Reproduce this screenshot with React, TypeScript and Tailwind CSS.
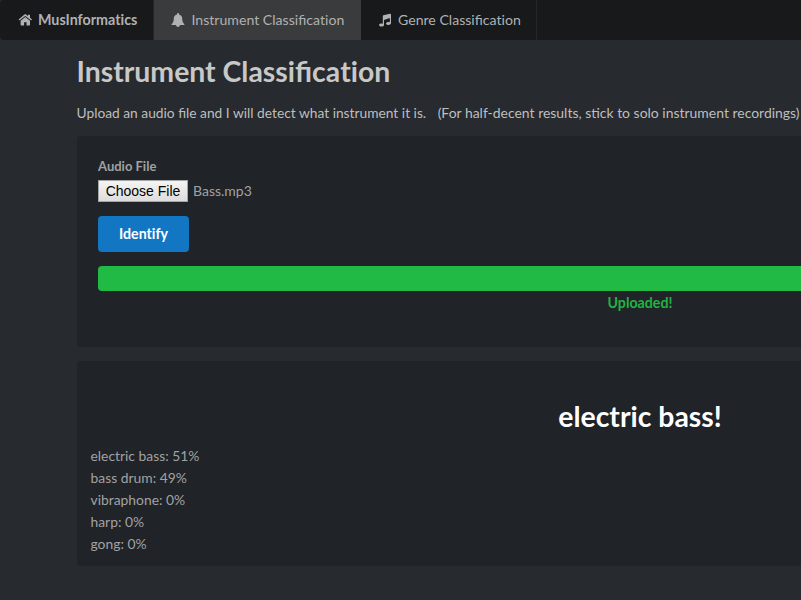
import type { ReactNode } from "react";

const results = ["electric bass: 51%", "bass drum: 49%", "vibraphone: 0%", "harp: 0%", "gong: 0%"];

function Icon({ children }: { children: ReactNode }) {
  return <svg viewBox="0 0 14 14" className="mr-[6px] size-[14px] shrink-0" fill="currentColor">{children}</svg>;
}

const HomeIcon = () => (
  <Icon>
    <path d="M7.3 3.900 12 7.800v4a.6.6 0 0 1-.6.6H8.500V9.200H6.100v3.200H3.200a.6.6 0 0 1-.6-.6v-4z" />
    <path d="M7.300 1.300c.3 0 .6.1.8.3l1.900 1.500V1.800H12v3l1.800 1.500c.2.1.2.3 0 .4l-.5.6c-.1.1-.3.1-.4 0L7.300 3 1.700 7.300c-.1.1-.3.1-.4 0l-.5-.6c-.2-.1-.2-.3 0-.4l5.700-4.700c.2-.2.5-.3.8-.3z" />
  </Icon>
);

const BellIcon = () => (
  <Icon>
    <path d="M7 0c.6 0 1 .4 1 .9v.5c2 .4 3.200 2 3.200 4 0 3 .8 4.600 2.300 5.800 0 .5-.4.9-1 .9H9c0 1.100-.9 1.900-2 1.900s-2-.8-2-1.900H1.500c-.6 0-1-.4-1-.9C2 10 2.800 8.400 2.800 5.400c0-2 1.200-3.600 3.200-4V.9C6 .4 6.400 0 7 0z" />
  </Icon>
);

const MusicIcon = () => (
  <Icon>
    <path d="M13 1.400v8.900c0 1.100-1.300 1.700-2.600 1.700s-2.400-.6-2.400-1.500S9.100 9 10.400 9c.5 0 1 .1 1.400.300V5.100L6 6.900v5c0 1.100-1.300 1.700-2.600 1.700S1 13 1 12.100s1.100-1.500 2.400-1.500c.5 0 1 .1 1.400.3V3c0-.3.200-.6.600-.7L12 .700c.6-.2 1 .2 1 .7z" />
  </Icon>
);

function Classification() {
  return <>Classifica<span className="[font-variant-ligatures:none]">tion</span></>;
}

export default function App() {
  return (
    <div className="h-[600px] w-[801px] overflow-hidden bg-[#272a2e] text-[14px] leading-[20px] text-[#bebebf]" style={{ fontFamily: "Lato, sans-serif" }}>
      <nav className="flex h-10 rounded-l bg-[#18191a] text-[#b0b1b2]">
        <a className="flex w-[154px] items-center border-r border-[#252627] pl-[18px] text-[14.3px] font-bold whitespace-nowrap"><HomeIcon /><span className="[font-variant-ligatures:none]">MusInformatics</span></a>
        <a className="flex w-[207px] items-center bg-[#3a3b3c] pl-[17px] text-[14.1px] whitespace-nowrap"><BellIcon /><span className="ml-[0.5px]">Instrument <Classification /></span></a>
        <a className="flex w-[176px] items-center border-r border-[#252627] pl-[17px] text-[14.1px] whitespace-nowrap"><MusicIcon /><span>Genre <Classification /></span></a>
      </nav>
      <main className="w-[1203px] pl-[77px]">
        <h1 className="-ml-[0.5px] pt-[13px] text-[28.4px] leading-[36px] font-bold text-[#c8c8c8]">Instrument <Classification /></h1>
        <p className="mt-[14px] -ml-[0.5px] flex gap-[11.5px] whitespace-nowrap">
          <span className="text-[13.78px]">Upload an audio file and I will detect what instrument it is.</span>
          <span className="text-[13.96px]">(For half-decent results, stick to solo instrument recordings)</span>
        </p>
        <section className="mt-[13px] h-[211px] rounded bg-[#202327] p-[21px] text-[#a0a2a4]">
          <div className="-mt-px text-[13px] font-bold">Audio File</div>
          <div className="mt-1 flex items-center">
            <button className="h-[22px] w-[90px] border border-[#a5a5a5] bg-linear-to-b from-[#f4f4f4] to-[#dddddd] text-[14px] leading-[20px] text-black" style={{ fontFamily: "'Liberation Sans', sans-serif" }}>Choose File</button>
            <span className="ml-[5px]">Bass.mp3</span>
          </div>
          <button className="mt-[14px] block h-9 w-[91px] rounded bg-[#1276c3] text-[14.2px] font-bold text-white [font-variant-ligatures:none]">Identify</button>
          <div className="mt-[14px] h-[25px] rounded bg-[#21ba45]" />
          <div className="mt-[2px] text-center text-[14.2px] font-bold text-[#21b343]">Uploaded!</div>
        </section>
        <section className="mt-[14px] h-[205px] rounded bg-[#202327] px-[14px] pt-[37px] text-[#a0a2a4]">
          <h2 className="text-center text-[28.4px] leading-[36px] font-bold text-white">electric bass!</h2>
          <ul className="mt-[11px] -ml-[0.5px] text-[13.86px] leading-[22px]">{results.map((r) => <li key={r}>{r}</li>)}</ul>
        </section>
      </main>
    </div>
  );
}
